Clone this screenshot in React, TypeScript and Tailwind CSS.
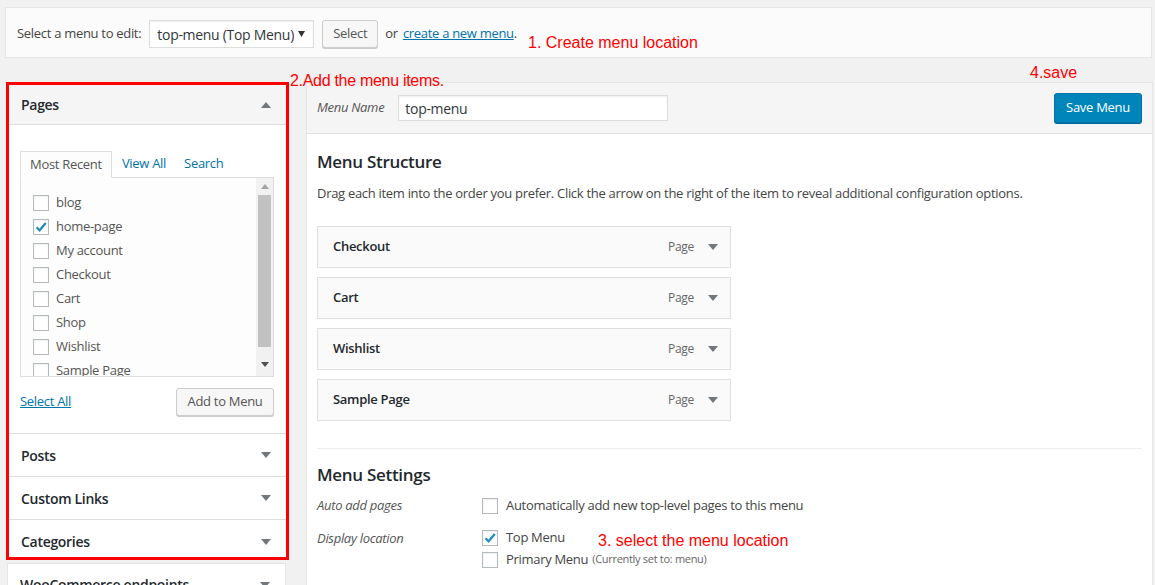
import React from 'react';

const Caret = ({ up = false, className = '' }: { up?: boolean; className?: string }) => (
  <svg width="10" height="6" viewBox="0 0 10 6" className={className}>
    {up ? <polygon points="0,6 10,6 5,0" fill="#72777c" /> : <polygon points="0,0 10,0 5,6" fill="#72777c" />}
  </svg>
);

const Check = ({ checked = false }: { checked?: boolean }) => (
  <span className="w-4 h-4 shrink-0 border border-[#b4b9be] bg-white shadow-[inset_0_1px_2px_rgba(0,0,0,0.07)] flex items-center justify-center">
    {checked && (
      <svg width="14" height="14" viewBox="0 0 14 14">
        <path d="M2.5 7.2 L5.6 10.3 L11.8 3" stroke="#1e8cbe" strokeWidth="2.2" fill="none" />
      </svg>
    )}
  </span>
);

const pages = [
  { name: 'blog' },
  { name: 'home-page', checked: true },
  { name: 'My account' },
  { name: 'Checkout' },
  { name: 'Cart' },
  { name: 'Shop' },
  { name: 'Wishlist' },
  { name: 'Sample Page' },
];

const menuItems = ['Checkout', 'Cart', 'Wishlist', 'Sample Page'];

function Section({ title, last = false }: { title: string; last?: boolean }) {
  return (
    <div className={`${last ? 'h-[38px] pt-[6px]' : 'h-[43px]'} shrink-0 border-t border-[#ddd] flex items-center justify-between pl-[12px] pr-[15px]`}>
      <span className="text-[14px] font-semibold text-[#23282d]">{title}</span>
      <Caret />
    </div>
  );
}

export default function App() {
  return (
    <div className="relative w-[1155px] h-[585px] overflow-hidden bg-[#f1f1f1] font-['Open_Sans',sans-serif] text-[13px] tracking-[-0.3px] text-[#444]">
      {/* top bar */}
      <div className="mt-[7px] ml-[5px] w-[1147px] h-[51px] border border-[#e5e5e5] bg-[#fbfbfb] flex items-center pt-[3px] pl-[11px]">
        <span className="text-[#444] whitespace-nowrap">Select a menu to edit:</span>
        <div className="ml-[8px] w-[165px] h-[28px] shrink-0 border border-[#ddd] bg-white flex items-center justify-between pl-[7px] pr-[8px] shadow-[inset_0_1px_2px_rgba(0,0,0,0.07)]">
          <span className="text-[14px] text-[#32373c] whitespace-nowrap">top-menu (Top Menu)</span>
          <svg width="7" height="6" viewBox="0 0 7 6"><polygon points="0,0 7,0 3.5,6" fill="#333" /></svg>
        </div>
        <button className="ml-[8px] w-[56px] h-[28px] border border-[#ccc] rounded-[3px] bg-[#f7f7f7] shadow-[0_1px_0_#ccc] text-[#555]">Select</button>
        <span className="ml-[7px] text-[#444]">or</span>
        <a className="ml-[5px] text-[#0073aa] underline whitespace-nowrap">create a new menu</a>
        <span>.</span>
      </div>

      <div className="mt-[24px] flex items-start">
        {/* left column */}
        <div className="ml-[6px] w-[283px] flex flex-col">
          <div className="border-[3px] border-[#ff0000] bg-white flex flex-col">
            <div className="h-[40px] shrink-0 bg-[#f5f5f5] border-b border-[#ddd] flex items-center justify-between pl-[12px] pr-[15px]">
              <span className="text-[14px] font-semibold text-[#23282d]">Pages</span>
              <Caret up />
            </div>
            <div className="pl-[11px] pr-[12px] pt-[26px] pb-[17px]">
              <div className="flex items-end h-[26px]">
                <div className="h-[27px] -mb-px border border-[#ddd] border-b-white bg-[#fdfdfd] px-[9px] flex items-center text-[#555] relative z-10">Most Recent</div>
                <span className="ml-[10px] text-[#0073aa] h-[26px] flex items-center">View All</span>
                <span className="ml-[18px] text-[#0073aa] h-[26px] flex items-center">Search</span>
              </div>
              <div className="h-[200px] border border-[#ddd] bg-[#fdfdfd] flex overflow-hidden">
                <div className="flex-1 pl-[12px] pt-[17px] flex flex-col gap-[8px]">
                  {pages.map((p) => (
                    <label key={p.name} className="flex items-center gap-[7px] h-[16px] text-[#555]">
                      <Check checked={p.checked} />
                      <span>{p.name}</span>
                    </label>
                  ))}
                </div>
                <div className="w-[17px] bg-[#f1f1f1] flex flex-col items-center">
                  <svg width="8" height="5" viewBox="0 0 8 5" className="mt-[6px]"><polygon points="0,5 8,5 4,0" fill="#a3a3a3" /></svg>
                  <div className="mt-[6px] w-[13px] h-[152px] bg-[#c1c1c1]" />
                  <svg width="8" height="5" viewBox="0 0 8 5" className="mt-[15px]"><polygon points="0,0 8,0 4,5" fill="#505050" /></svg>
                </div>
              </div>
              <div className="mt-[11px] flex items-center justify-between">
                <a className="text-[#0073aa] underline">Select All</a>
                <button className="h-[28px] w-[98px] border border-[#ccc] rounded-[3px] bg-[#f7f7f7] shadow-[0_1px_0_#ccc] text-[#555]">Add to Menu</button>
              </div>
            </div>
            <Section title="Posts" />
            <Section title="Custom Links" />
            <Section title="Categories" last />
          </div>
          <div className="mt-[3px] ml-px w-[279px] h-[43px] bg-white border border-[#e5e5e5] flex items-center justify-between pl-[12px] pr-[15px]">
            <span className="text-[14px] font-semibold text-[#23282d]">WooCommerce endpoints</span>
            <Caret />
          </div>
        </div>

        {/* right panel */}
        <div className="ml-[17px] w-[847px] h-[510px] border border-[#e5e5e5] bg-white flex flex-col">
          <div className="h-[51px] bg-[#f5f5f5] border-b border-[#dfdfdf] flex items-center pl-[10px] pr-[10px]">
            <span className="italic text-[#555]">Menu Name</span>
            <div className="ml-[14px] w-[270px] h-[26px] border border-[#ddd] bg-white flex items-center pl-[6px] text-[14px] text-[#32373c] shadow-[inset_0_1px_2px_rgba(0,0,0,0.07)]">top-menu</div>
            <button className="ml-auto w-[88px] h-[30px] rounded-[3px] bg-[#0085ba] border border-[#0073aa] shadow-[0_1px_0_#006799] text-white">Save Menu</button>
          </div>
          <div className="pl-[10px] pr-[10px] pt-[16px]">
            <h3 className="text-[17px] font-semibold text-[#23282d] leading-[24px]">Menu Structure</h3>
            <p className="mt-[10px] text-[#444]">Drag each item into the order you prefer. Click the arrow on the right of the item to reveal additional configuration options.</p>
            <div className="mt-[22px] flex flex-col gap-[9px]">
              {menuItems.map((m) => (
                <div key={m} className="w-[414px] h-[42px] border border-[#dfdfdf] bg-[#fafafa] flex items-center pl-[15px] pr-[12px]">
                  <span className="font-semibold text-[#23282d]">{m}</span>
                  <span className="ml-auto text-[12px] text-[#666]">Page</span>
                  <Caret className="ml-[14px]" />
                </div>
              ))}
            </div>
            <div className="mt-[27px] w-[825px] border-t border-[#eee]" />
            <h3 className="mt-[14px] text-[17px] font-semibold text-[#23282d] leading-[24px]">Menu Settings</h3>
            <div className="mt-[11px] flex items-center h-[16px]">
              <span className="w-[165px] italic text-[#555]">Auto add pages</span>
              <Check />
              <span className="ml-[8px]">Automatically add new top-level pages to this menu</span>
            </div>
            <div className="mt-[16px] flex items-start">
              <span className="w-[165px] italic text-[#555] leading-[16px]">Display location</span>
              <div className="flex flex-col gap-[6px]">
                <div className="flex items-center h-[16px]">
                  <Check checked />
                  <span className="ml-[8px]">Top Menu</span>
                </div>
                <div className="flex items-center h-[16px]">
                  <Check />
                  <span className="ml-[8px]">Primary Menu</span>
                  <span className="ml-[4px] text-[11px] text-[#666]">(Currently set to: menu)</span>
                </div>
              </div>
            </div>
          </div>
        </div>
      </div>

      {/* annotations */}
      <span className="absolute left-[528px] top-[34px] font-['Liberation_Sans',Arial,sans-serif] text-[16px] tracking-normal text-[#ff0000] leading-[18px]">1. Create menu location</span>
      <span className="absolute left-[290px] top-[72px] font-['Liberation_Sans',Arial,sans-serif] text-[16px] tracking-[-0.3px] text-[#ff0000] leading-[18px]">2.Add the menu items.</span>
      <span className="absolute left-[1030px] top-[64px] font-['Liberation_Sans',Arial,sans-serif] text-[16px] tracking-normal text-[#ff0000] leading-[18px]">4.save</span>
      <span className="absolute left-[598px] top-[532px] font-['Liberation_Sans',Arial,sans-serif] text-[16px] tracking-normal text-[#ff0000] leading-[18px]">3. select the menu location</span>
    </div>
  );
}
